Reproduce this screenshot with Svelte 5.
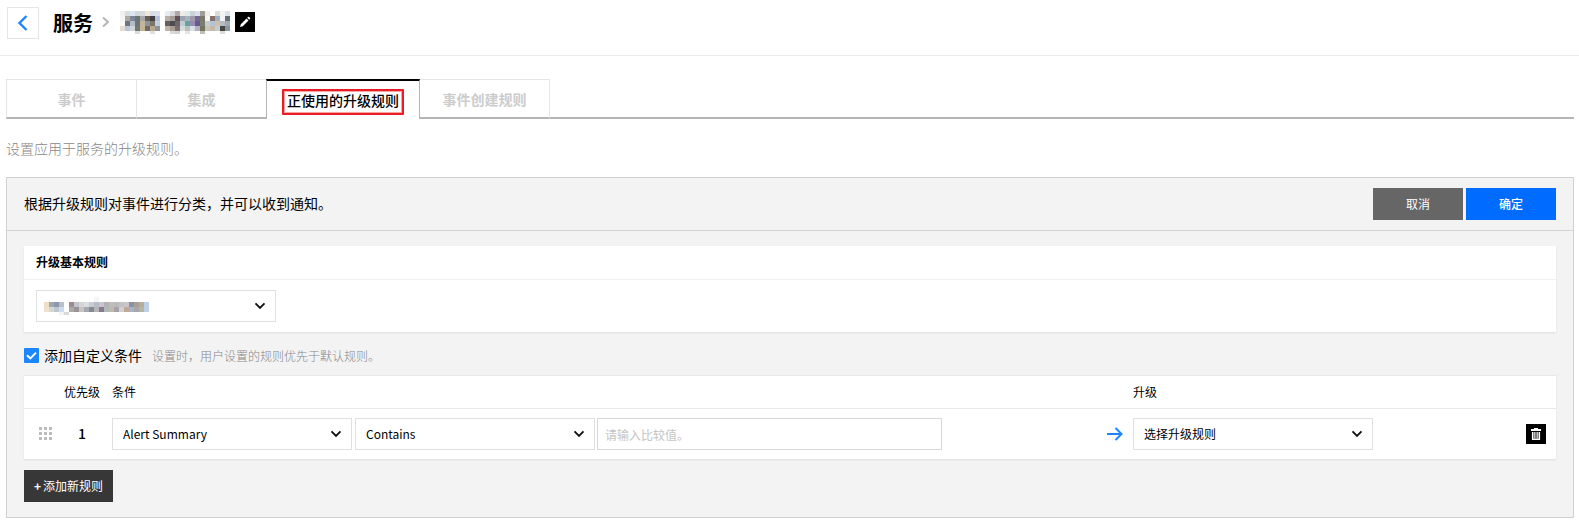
<script>
  const nameBlocks = [
    'f4f0ee d8dde2 dce6f2 d4d6d8 d4dae0 f2e6d6 d8dce8 d8e0ee - e6ecf2 d8d8dc b0a8a8 f2ece8 dcecea c8d4d8 dcdcf0 a09c98 f2ece4 - dcdcd8 f4f4f4 d8e4ea',
    'f4f4f6 b0a89e 7c869a 6c7472 a4a8a8 685e56 404040 b4c0dc - b8b0a4 a49c98 605058 9ca4b4 a8b4b8 a098a8 706890 78786a f6f4f4 86706a a0b0c4 f4f4f4 607078',
    'f8f8f8 70727c b4bcc8 6c7472 c4b498 8c949c 807468 c0d0e4 - 685c5c 4c4c50 706468 c0ccd4 68a09c 988cb4 685890 788070 cccaca b4c4d4 d0c0a8 b4bcc8 a0a8b0',
    'e6dcd4 b8c8d8 d0d4d8 707870 c4b498 706c60 b8a890 8c9498 - c0b4a4 a89c94 7c6c6c d4dce0 b8c0c0 d8e0e8 b4b0c0 74745e c8c4bc c8b8a8 c4ccd4 484440 8898a0',
    '- - - dcdcdc - - dce0e4 - - - d8d8d8 d4d4d8 - e4e4e4 - - c0c0b8 - - - dcdcdc -'
  ].map((r) => r.split(' '));
  const ruleBlocks = [
    '- - - - - - - - - - f6f6f6 - - - - - - - - - -',
    'f0dec6 a0aaac 8c96b0 b8c0c8 - 9c8c90 c4c4cc d8d4d4 d8dee2 c8ccd0 b8bcc8 c8c4cc b4b0b4 c0bcbc b8bcb8 c4c0c8 c8c8cc 9090a0 a8a094 b4ac9c bcd0e8',
    'f0e0d0 d4d8d4 bec6d0 ccdaf2 - b0a8a8 989498 c8c4c0 a8a8b0 7e8c94 b8b4b8 847c8c b0b8bc bcbca4 a8a0ac d0d0d0 c0a898 a4b4cc a8a8a8 b8b4a4 bcd0e8',
    '- - - f2f2f2 d8d8d8 - - - - - - - - - - - - - - - -'
  ].map((r) => r.split(' '));
  const tabs = ['事件', '集成', '正使用的升级规则', '事件创建规则'];
  let active = 2;
  let custom = true;
</script>

{#snippet chevron()}
  <svg class="chev" width="12" height="8" viewBox="0 0 12 8"><path d="M1.500 1.400 6 5.900l4.500-4.500" fill="none" stroke="#111" stroke-width="1.900" /></svg>
{/snippet}

{#snippet blocks(rows, lastRow)}
  <svg width={rows[0].length * 5} height={(rows.length - 1) * 5 + lastRow} shape-rendering="crispEdges">
    {#each rows as row, y}
      {#each row as c, x}
        {#if c !== '-'}<rect x={x * 5} y={y * 5} width="5" height="5" fill={'#' + c} />{/if}
      {/each}
    {/each}
  </svg>
{/snippet}

<div class="page">
  <header>
    <button class="back" aria-label="返回"><svg width="12" height="18" viewBox="0 0 12 18"><path d="M9.500 2 2.500 9l7 7" fill="none" stroke="#1b87fb" stroke-width="2.400" /></svg></button>
    <h1>服务</h1>
    <svg class="crumb" width="8" height="12" viewBox="0 0 8 12"><path d="M1 1.500 6 6l-5 4.500" fill="none" stroke="#b5b5b5" stroke-width="2" /></svg>
    <div class="name">{@render blocks(nameBlocks, 3)}</div>
    <button class="edit" aria-label="编辑"><svg width="20" height="20" viewBox="0 0 20 20"><path d="m5 15 .8-2.800 5.700-5.700 2 2-5.700 5.700zM12.200 5.800l.8-.8q.6-.5 1.200 0l.8.8q.5.6 0 1.200l-.8.8z" fill="#fff" /></svg></button>
  </header>

  <nav>
    {#each tabs as t, i}
      <button class="tab" class:active={i === active} class:last={i === 3} on:click={() => (active = i)}><span>{t}</span></button>
    {/each}
    <div class="fill"></div>
  </nav>
  <p class="desc">设置应用于服务的升级规则。</p>

  <section class="panel">
    <div class="top">
      <span>根据升级规则对事件进行分类，并可以收到通知。</span>
      <div class="actions"><button class="cancel">取消</button><button class="ok">确定</button></div>
    </div>
    <div class="body">
      <div class="card">
        <h2>升级基本规则</h2>
        <div class="base"><div class="select masked">{@render blocks(ruleBlocks, 3)}{@render chevron()}</div></div>
      </div>

      <div class="check">
        <button class="box" aria-label="添加自定义条件" on:click={() => (custom = !custom)}>
          {#if custom}<svg width="15" height="15" viewBox="0 0 15 15"><path d="m3 7.200 3.400 3.300L12 4.700" fill="none" stroke="#fff" stroke-width="1.900" /></svg>{/if}
        </button>
        <span class="lbl">添加自定义条件</span>
        <span class="hint">设置时，用户设置的规则优先于默认规则。</span>
      </div>

      <div class="card table">
        <div class="row head">
          <span></span><span class="prio">优先级</span><span>条件</span><span></span><span>升级</span><span></span>
        </div>
        <div class="row line">
          <svg class="grip" width="14" height="14" fill="#bcbcbc" shape-rendering="crispEdges">
            {#each [0, 5, 10] as y}{#each [0, 5, 10] as x}<rect {x} {y} width="3" height="3" />{/each}{/each}
          </svg>
          <span class="prio num">1</span>
          <div class="cond">
            <div class="select">Alert Summary{@render chevron()}</div>
            <div class="select">Contains{@render chevron()}</div>
            <input placeholder="请输入比较值。" />
          </div>
          <svg class="arrow" width="16" height="14" viewBox="0 0 16 14"><path d="M0 7h14M8.500 1l6 6-6 6" fill="none" stroke="#1b87fb" stroke-width="2" /></svg>
          <div class="select">选择升级规则{@render chevron()}</div>
          <button class="trash" aria-label="删除"><svg width="20" height="20" viewBox="0 0 20 20"><path d="M8 4h4v1h3v2H5V5h3z" fill="#fff" /><path d="M6.500 8v7.300h7V8" fill="#777" stroke="#fff" stroke-width="1.200" /><path d="M8.600 8v6M11.400 8v6" stroke="#ccc" stroke-width=".9" /></svg></button>
        </div>
      </div>
      <button class="add"><b>+</b>添加新规则</button>
    </div>
  </section>
</div>

<style>
  :global(body) { background: #fff; }
  .page, button, input { font-family: "Noto Sans CJK SC", sans-serif; box-sizing: border-box; }
  .page { height: 524px; width: 1579px; overflow: hidden; color: #000; font-size: 12px; }
  svg { display: block; flex: none; }
  button { border: 0; padding: 0; margin: 0; background: none; cursor: pointer; }
  header { display: flex; height: 56px; box-sizing: border-box; border-bottom: 1px solid #ebebeb; padding: 7px 0 0 7px; align-items: flex-start; }
  .back { width: 32px; height: 32px; border: 1px solid #e5e5e5; display: flex; align-items: center; justify-content: center; padding-right: 1px; }
  h1 { margin: 0 0 0 14px; font-size: 20px; line-height: 32px; font-weight: 700; width: 40px; }
  .crumb { margin: 9px 0 0 9px; }
  .name { margin: 4px 0 0 10px; }
  .edit { width: 20px; height: 20px; background: #000; margin: 5px 0 0 5px; }
  nav { display: flex; margin: 23px 5px 0 6px; height: 40px; }
  .tab { box-sizing: border-box; width: 130px; border: 1px solid #e5e5e5; border-right: 0; border-bottom: 2px solid #b5b5b5; color: #ccc; font-size: 14px; font-weight: 700; line-height: 20px; display: flex; align-items: center; justify-content: center; }
  .tab.active { width: 154px; border: 1px solid #b5b5b5; border-top: 2px solid #000; border-bottom: 0; color: #000; font-weight: 500; padding: 0; }
  .tab.active span { box-sizing: border-box; height: 26px; width: 122px; border: 2.500px solid #ec1c24; border-radius: 1px; outline: 1px solid rgba(236, 28, 36, .4); outline-offset: -3px; line-height: 18px; margin-top: 3px; }
  .tab.last { border-left: 0; border-right: 1px solid #e5e5e5; }
  .fill { flex: 1; border-bottom: 2px solid #b5b5b5; }
  .desc { margin: 18px 0 0 6px; font-size: 14px; line-height: 22px; color: #888; font-weight: 300; }
  .panel { box-sizing: border-box; margin: 18px 5px 0 6px; height: 341px; border: 1px solid #d0d0d0; background: #f3f3f3; }
  .top { display: flex; justify-content: space-between; height: 52px; border-bottom: 1px solid #d5d5d5; padding: 0 17px; font-size: 14px; line-height: 50px; }
  .actions { display: flex; gap: 3px; padding-top: 10px; }
  .actions button { width: 90px; height: 32px; color: #fff; font-size: 12px; line-height: 32px; background: #666; }
  .actions .ok { background: #006cff; font-weight: 500; }
  .body { padding: 15px 17px 0; }
  .card { background: #fff; box-shadow: 0 1px 2px rgba(0, 0, 0, .09); }
  h2 { margin: 0; font-size: 12px; font-weight: 700; line-height: 32px; height: 33px; padding-left: 12px; border-bottom: 1px solid #f0f0f0; }
  .base { padding: 10px 12px 11px; height: 31px; }
  .select { box-sizing: border-box; width: 240px; height: 32px; border: 1px solid #e0e0e0; display: flex; align-items: center; justify-content: space-between; padding: 0 9px 0 10px; background: #fff; line-height: 30px; }
  .masked { padding-left: 7px; }
  .check { display: flex; align-items: center; height: 43px; padding-top: 4px; box-sizing: border-box; }
  .box { width: 15px; height: 15px; background: #1b87fb; border-radius: 1px; }
  .lbl { font-size: 14px; margin: 0 0 2px 5px; }
  .hint { color: #888; font-weight: 300; margin-left: 10px; }
  .row { display: grid; grid-template-columns: 33px 55px 995px 26px 240px 1fr; align-items: center; box-sizing: border-box; }
  .row.head { height: 34px; border-top: 1px solid #e8e8e8; border-bottom: 1px solid #e8e8e8; padding-bottom: 2px; }
  .row.line { height: 50px; }
  .table { height: 84px; }
  .prio { padding-left: 7px; }
  .num { font-size: 14px; font-weight: 500; padding: 0 7px 3px 21px; }
  .grip { margin-left: 15px; }
  .cond { display: flex; }
  .cond .select { margin-right: 3px; }
  .cond .select + .select { margin-right: 2px; }
  input { width: 345px; height: 32px; border: 1px solid #d8d8d8; padding: 0 7px; font-size: 12px; }
  input::placeholder { color: #c4c4c4; opacity: 1; }
  .trash { width: 20px; height: 20px; background: #000; justify-self: end; margin-right: 10px; }
  .add { display: block; width: 89px; height: 32px; background: #373737; color: #fff; font-size: 12px; line-height: 32px; margin-top: 11px; }
  .add b { margin-right: 2px; }
</style>
